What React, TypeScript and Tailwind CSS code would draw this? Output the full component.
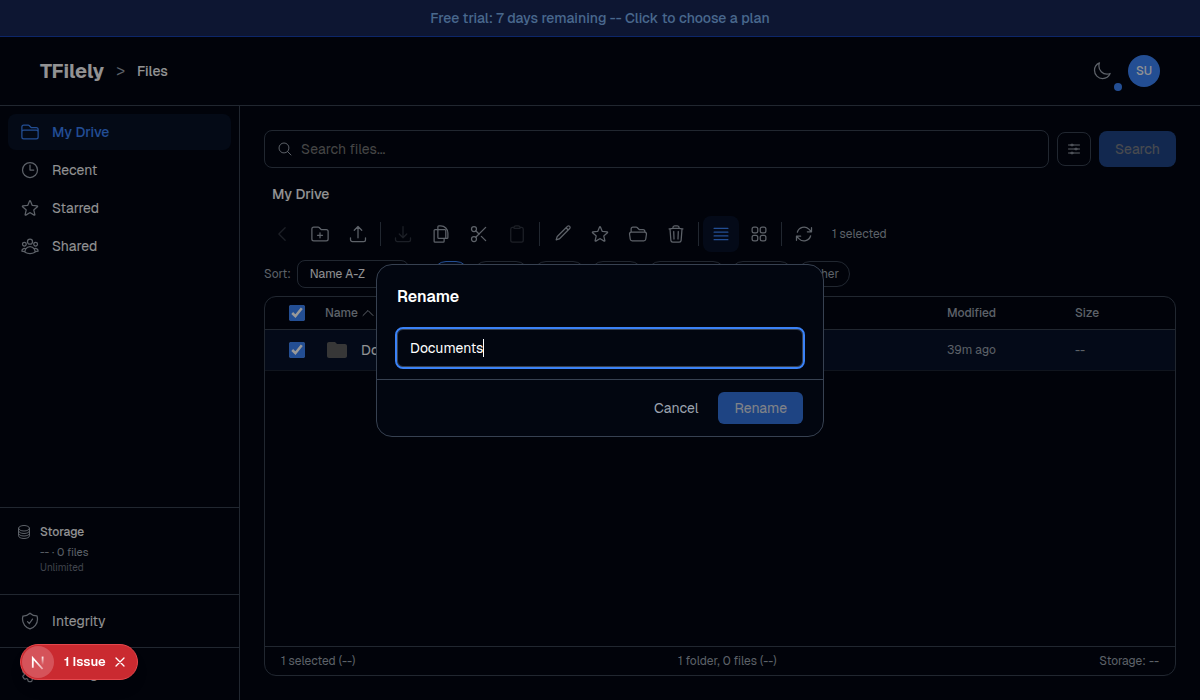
import { useState, type ReactNode } from 'react'
import {
  HiOutlineAdjustmentsHorizontal, HiOutlineArrowDownTray, HiOutlineArrowPath, HiOutlineArrowUpTray,
  HiOutlineBars4, HiOutlineChevronLeft, HiOutlineChevronUp, HiOutlineCircleStack, HiOutlineClipboard,
  HiOutlineClock, HiOutlineCog6Tooth, HiOutlineFolder, HiOutlineFolderOpen, HiOutlineFolderPlus,
  HiOutlineMagnifyingGlass, HiOutlineMoon, HiOutlineShieldCheck, HiOutlineSquares2X2, HiOutlineStar,
  HiOutlineTrash, HiOutlineUserGroup,
} from 'react-icons/hi2'
import { MdFolder } from 'react-icons/md'
import { Scissors } from 'lucide-react'

const navItems = [
  { label: 'My Drive', icon: HiOutlineFolder, active: true },
  { label: 'Recent', icon: HiOutlineClock },
  { label: 'Starred', icon: HiOutlineStar },
  { label: 'Shared', icon: HiOutlineUserGroup },
]

const filters = ['All', 'Image', 'Video', 'Audio', 'Document', 'Archive', 'Other']

function NavLink({ icon: Icon, label, active }: { icon: typeof HiOutlineFolder; label: string; active?: boolean }) {
  return (
    <a
      href="#"
      className={`flex h-9 items-center gap-3 rounded-lg px-3 text-sm ${
        active ? 'bg-[#071126] font-medium text-[#3b82f6]' : 'text-[#f3f4f6]'
      }`}
    >
      <Icon className={`size-5 ${active ? 'text-[#3b82f6]' : 'text-[#9ca3af]'}`} />
      {label}
    </a>
  )
}

function ToolButton({ label, children, disabled, active }: {
  label: string
  children: ReactNode
  disabled?: boolean
  active?: boolean
}) {
  return (
    <button
      aria-label={label}
      disabled={disabled}
      className={`flex size-9 shrink-0 items-center justify-center rounded-lg text-xl ${
        active ? 'bg-[#081229] text-[#3b82f6]' : 'text-[#9ca3af]'
      } disabled:opacity-30`}
    >
      {children}
    </button>
  )
}

function CopyIcon() {
  return (
    <svg viewBox="0 0 24 24" className="size-5" fill="none" stroke="currentColor" strokeWidth="1.5" strokeLinecap="round" strokeLinejoin="round">
      <path d="M15.75 17.25v3.375c0 .621-.504 1.125-1.125 1.125h-9.75a1.125 1.125 0 0 1-1.125-1.125V7.875c0-.621.504-1.125 1.125-1.125h11.75c.621 0 1.125.504 1.125 1.125v9.375" />
      <path d="M8.25 16.125V3.375c0-.621.504-1.125 1.125-1.125h2.375c4.7 0 8.5 3.9 8.5 8.5v5.375c0 .621-.504 1.125-1.125 1.125h-9.75a1.125 1.125 0 0 1-1.125-1.125z" />
    </svg>
  )
}

function PencilIcon() {
  return (
    <svg viewBox="0 0 24 24" className="size-5" fill="none" stroke="currentColor" strokeWidth="1.5" strokeLinecap="round" strokeLinejoin="round">
      <path d="M16.862 4.487l1.687-1.688a1.875 1.875 0 1 1 2.652 2.652L9.6 17.05a4.5 4.5 0 0 1-1.9 1.13l-2.7.8.8-2.7a4.5 4.5 0 0 1 1.13-1.86zm0 0L19.5 7.125" />
    </svg>
  )
}

function Separator() {
  return <div className="mx-0.5 h-6 w-px shrink-0 bg-[#374151]" />
}

function Check({ label }: { label: string }) {
  return (
    <input
      type="checkbox"
      aria-label={label}
      defaultChecked
      className="block size-4 accent-[#3b82f6]"
    />
  )
}

function Sidebar() {
  return (
    <aside className="flex w-60 shrink-0 flex-col border-r border-[#374151]">
      <nav className="flex flex-1 flex-col gap-0.5 p-2">
        {navItems.map((item) => (
          <NavLink key={item.label} {...item} />
        ))}
      </nav>
      <div className="flex gap-2 border-t border-[#374151] px-4 pt-4 pb-[18px]">
        <HiOutlineCircleStack className="size-4 text-[#9ca3af]" />
        <div>
          <p className="mb-1 text-xs leading-4 font-medium text-[#f3f4f6]">Storage</p>
          <p className="text-[11px] leading-4 text-[#9ca3af]">-- · 0 files</p>
          <p className="text-[10px] leading-4 text-[#6b7280]">Unlimited</p>
        </div>
      </div>
      <div className="border-t border-[#374151] p-2">
        <NavLink icon={HiOutlineShieldCheck} label="Integrity" />
      </div>
      <div className="border-t border-[#374151] p-2">
        <NavLink icon={HiOutlineCog6Tooth} label="Settings" />
      </div>
    </aside>
  )
}

function Toolbar() {
  return (
    <div className="mt-3 flex items-center gap-0.5">
      <ToolButton label="Back" disabled><HiOutlineChevronLeft /></ToolButton>
      <ToolButton label="New folder"><HiOutlineFolderPlus /></ToolButton>
      <ToolButton label="Upload"><HiOutlineArrowUpTray /></ToolButton>
      <Separator />
      <ToolButton label="Download" disabled><HiOutlineArrowDownTray /></ToolButton>
      <ToolButton label="Copy"><CopyIcon /></ToolButton>
      <ToolButton label="Cut"><Scissors size={20} strokeWidth={1.5} /></ToolButton>
      <ToolButton label="Paste" disabled><HiOutlineClipboard /></ToolButton>
      <Separator />
      <ToolButton label="Rename"><PencilIcon /></ToolButton>
      <ToolButton label="Star"><HiOutlineStar /></ToolButton>
      <ToolButton label="Move"><HiOutlineFolderOpen /></ToolButton>
      <ToolButton label="Delete"><HiOutlineTrash /></ToolButton>
      <Separator />
      <ToolButton label="List view" active><HiOutlineBars4 /></ToolButton>
      <ToolButton label="Grid view"><HiOutlineSquares2X2 /></ToolButton>
      <Separator />
      <ToolButton label="Refresh"><HiOutlineArrowPath /></ToolButton>
      <span className="ml-2 text-xs text-[#9ca3af]">1 selected</span>
    </div>
  )
}

function FileTable() {
  return (
    <section className="mt-2 flex flex-1 flex-col overflow-hidden rounded-xl border border-[#374151]">
      <table className="w-full table-fixed text-left text-xs text-[#9ca3af]">
        <thead>
          <tr className="h-8 border-b border-[#374151]">
            <th className="w-12 pl-6"><Check label="Select all" /></th>
            <th className="pl-3 font-medium">
              <span className="flex items-center gap-0.5">Name <HiOutlineChevronUp className="size-4" /></span>
            </th>
            <th className="w-32 pl-3 font-medium">Modified</th>
            <th className="w-28 pl-3 font-medium">Size</th>
          </tr>
        </thead>
        <tbody>
          <tr className="h-[41px] border-b border-[#1b2432] bg-[#081229]">
            <td className="pl-6"><Check label="Select Documents" /></td>
            <td className="pl-3">
              <span className="flex items-center gap-3 text-sm text-[#f3f4f6]">
                <MdFolder className="size-6 text-[#5c5c5c]" />
                Documents
              </span>
            </td>
            <td className="pl-3">39m ago</td>
            <td className="pl-3">--</td>
          </tr>
        </tbody>
      </table>
      <footer className="mt-auto flex h-[29px] items-center justify-between border-t border-[#374151] px-4 text-xs text-[#9ca3af]">
        <span>1 selected (--)</span>
        <span>1 folder, 0 files (--)</span>
        <span>Storage: --</span>
      </footer>
    </section>
  )
}

function RenameDialog() {
  const [name, setName] = useState('Documents')

  return (
    <div className="fixed inset-0 flex items-center justify-center bg-black/40">
      <div role="dialog" aria-labelledby="rename-title" className="w-full max-w-md rounded-2xl border border-[#374151] bg-[#020610]">
        <div className="px-5 pt-5 pb-3">
          <h2 id="rename-title" className="mb-5 text-base font-semibold text-white">Rename</h2>
          <div className="flex h-[38px] items-center rounded-md border border-[#374151] px-3 outline-2 outline-[#3b82f6]">
            <input
              aria-label="New name"
              value={name}
              onChange={(e) => setName(e.target.value)}
              className="field-sizing-content max-w-full bg-transparent text-sm text-white caret-transparent outline-none"
            />
            <span className="h-[18px] w-px bg-white" />
          </div>
        </div>
        <div className="flex justify-end gap-1 border-t border-[#374151] px-5 py-3 text-sm">
          <button className="h-8 px-4 text-[#9ca3af]">Cancel</button>
          <button disabled className="h-8 rounded-md bg-[#3b82f6] px-4 text-white disabled:opacity-50">Rename</button>
        </div>
      </div>
    </div>
  )
}

function IssueBadge() {
  return (
    <div className="fixed bottom-5 left-5 flex h-9 items-center rounded-full border border-[#e5484d] bg-[#ca2a30] pr-[7px] pl-px text-[13px] font-semibold text-white shadow-lg">
      <button aria-label="Open dev tools" className="flex size-8 items-center justify-center rounded-full bg-[#d5535a]">
        <svg viewBox="0 0 32 32" className="size-8" fill="none">
          <defs>
            <linearGradient id="n-diagonal" x1="14" y1="15" x2="22" y2="24" gradientUnits="userSpaceOnUse">
              <stop stopColor="#fff" />
              <stop offset="1" stopColor="#fff" stopOpacity="0.4" />
            </linearGradient>
            <linearGradient id="n-stem" x1="21" y1="10" x2="21" y2="19" gradientUnits="userSpaceOnUse">
              <stop stopColor="#fff" />
              <stop offset="1" stopColor="#fff" stopOpacity="0" />
            </linearGradient>
          </defs>
          <path d="M10.8 21.8V12l9.8 11" stroke="url(#n-diagonal)" strokeWidth="1.8" />
          <path d="M20.6 10.6v9" stroke="url(#n-stem)" strokeWidth="1.8" />
        </svg>
      </button>
      <button className="pr-1 pl-2.5">1 Issue</button>
      <button aria-label="Hide issues" className="flex size-5 items-center justify-center">
        <svg viewBox="0 0 12 12" className="size-3" stroke="currentColor" strokeWidth="1.3" strokeLinecap="round">
          <path d="M2 2l8 8M10 2l-8 8" />
        </svg>
      </button>
    </div>
  )
}

export default function App() {
  return (
    <div className="flex min-h-screen flex-col bg-[#020611] font-['Geist','Inter',sans-serif] text-[#f3f4f6]">
      <a href="#" className="flex h-[37px] items-center justify-center border-b border-[#1540b0] bg-[#172554] text-sm font-medium text-[#7aaeea]">
        Free trial: 7 days remaining -- Click to choose a plan
      </a>

      <header className="flex h-[69px] items-center justify-between border-b border-[#374151] px-10">
        <div className="flex items-center gap-3">
          <h1 className="text-xl font-bold">TFilely</h1>
          <span className="text-base text-[#9ca3af]">&gt;</span>
          <span className="text-sm font-medium">Files</span>
        </div>
        <div className="flex items-center gap-2">
          <button aria-label="Toggle theme" className="relative flex size-9 items-center justify-center">
            <HiOutlineMoon className="size-5 text-[#9ca3af]" />
            <span className="absolute -right-0.5 -bottom-0.5 size-2 rounded-full bg-[#3b82f6]" />
          </button>
          <button className="size-8 rounded-full bg-[#3b82f6] text-xs font-medium">SU</button>
        </div>
      </header>

      <div className="flex flex-1">
        <Sidebar />
        <main className="flex min-w-0 flex-1 flex-col p-6">
          <div className="flex items-center gap-2">
            <label className="flex h-[38px] flex-1 items-center gap-2 rounded-lg border border-[#374151] px-3">
              <HiOutlineMagnifyingGlass className="size-4 text-[#9ca3af]" />
              <input
                type="search"
                aria-label="Search files"
                placeholder="Search files..."
                className="flex-1 bg-transparent text-sm outline-none placeholder:text-[#757575]"
              />
            </label>
            <button aria-label="Advanced filters" className="flex size-[34px] items-center justify-center rounded-lg border border-[#374151]">
              <HiOutlineAdjustmentsHorizontal className="size-4 text-[#9ca3af]" />
            </button>
            <button disabled className="h-9 rounded-lg bg-[#3b82f6] px-4 text-sm disabled:opacity-50">Search</button>
          </div>

          <h2 className="mt-4 px-2 text-sm leading-5 font-medium">My Drive</h2>
          <Toolbar />

          <div className="mt-2 flex items-center gap-1 text-xs text-[#9ca3af]">
            <label htmlFor="sort">Sort:</label>
            <select
              id="sort"
              className="mr-5 ml-0.5 h-7 w-28 appearance-none rounded-lg border border-[#374151] px-3 text-[#f3f4f6]"
            >
              <option>Name A-Z</option>
              <option>Name Z-A</option>
            </select>
            {filters.map((filter, i) => (
              <button
                key={filter}
                className={`h-[26px] rounded-full border px-2.5 ${
                  i === 0 ? 'border-[#3b82f6] bg-[#081229] text-[#3b82f6]' : 'border-[#374151]'
                }`}
              >
                {filter}
              </button>
            ))}
          </div>

          <FileTable />
        </main>
      </div>

      <RenameDialog />
      <IssueBadge />
    </div>
  )
}
